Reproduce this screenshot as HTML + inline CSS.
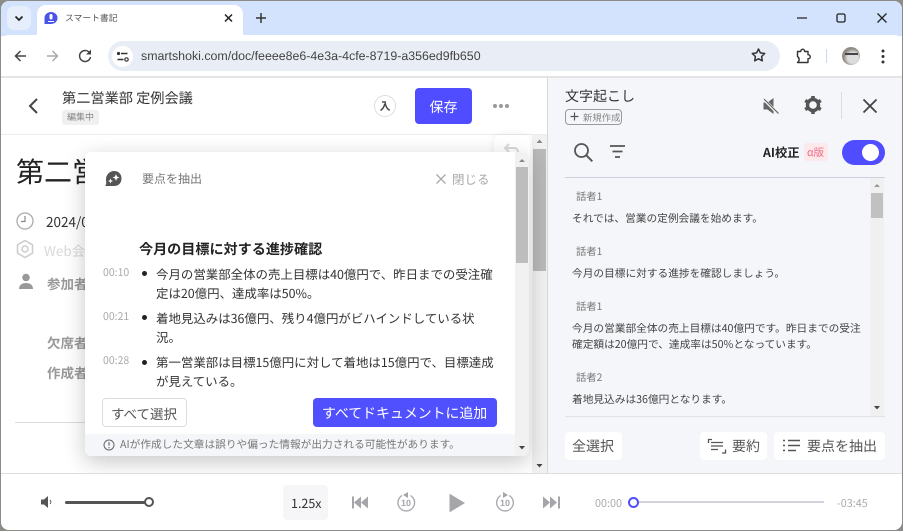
<!DOCTYPE html>
<html lang="ja"><head><meta charset="utf-8"><title>スマート書記</title>
<style>
*{box-sizing:border-box}
html,body{margin:0;padding:0;width:903px;height:531px;overflow:hidden;background:#8c8c86}
body{font-family:"Liberation Sans","Noto Sans CJK JP",sans-serif;position:relative;text-rendering:geometricPrecision}
#win{position:absolute;left:1px;top:1px;width:901px;height:529px;border-radius:8px;overflow:hidden;background:#fff;filter:blur(.35px)}
#in{position:absolute;left:-1px;top:-1px;width:903px;height:531px}
.a{position:absolute}
.t{position:absolute;white-space:nowrap;line-height:20px;height:20px;color:#333;font-family:"Noto Sans CJK JP","Liberation Sans",sans-serif}
svg{position:absolute;overflow:visible}
</style></head><body>
<div id="win"><div id="in">

<!-- tab strip -->
<div class="a" style="left:0;top:0;width:903px;height:36px;background:#d3e3fd"></div>
<div class="a" style="left:7px;top:6px;width:24px;height:24px;border-radius:7px;background:#e6eefb"></div>
<svg style="left:0;top:0" width="60" height="36"><path d="M15.500 16.500l3.500 3.500 3.500-3.500" fill="none" stroke="#222" stroke-width="1.700"/></svg>
<div class="a" style="left:37px;top:5px;width:206px;height:31px;background:#fff;border-radius:9px 9px 0 0"></div>
<svg style="left:0;top:0" width="60" height="36"><path d="M51 12c3.600 0 6.500 2.600 6.500 6 0 3.500-2.900 6-6.500 6h-6.500v-6c0-3.400 2.900-6 6.500-6z" fill="#4a55e8"/><rect x="49.500" y="14" width="3" height="5.500" rx="1.500" fill="#fff"/><path d="M48 21.500h6" stroke="#fff" stroke-width="1"/></svg>
<div class="t" style="left:65px;top:8px;font-size:8.800px;color:#555">スマート書記</div>
<svg style="left:0;top:0" width="300" height="36"><path d="M225 14.500l7 7M232 14.500l-7 7" stroke="#222" stroke-width="1.500"/><path d="M261 13v10M256 18h10" stroke="#333" stroke-width="1.500"/></svg>
<svg style="left:780px;top:0" width="123" height="36"><path d="M17 18h10" stroke="#222" stroke-width="1.300"/><rect x="57" y="14" width="8" height="8" rx="1.500" fill="none" stroke="#222" stroke-width="1.300"/><path d="M97.500 13.500l9 9M106.500 13.500l-9 9" stroke="#222" stroke-width="1.300"/></svg>

<!-- toolbar -->
<div class="a" style="left:0;top:35px;width:903px;height:42px;background:#fff;border-radius:9px 9px 0 0"></div>
<svg style="left:0;top:35px" width="110" height="42"><path d="M26 21H16M20.500 16l-5 5 5 5" fill="none" stroke="#444" stroke-width="1.500"/><path d="M47 21h10M52.500 16l5 5-5 5" fill="none" stroke="#aaa" stroke-width="1.500"/><path d="M90 18.500a5.500 5.500 0 1 0 .5 3.500" fill="none" stroke="#444" stroke-width="1.500"/><path d="M91 14.500v5h-5z" fill="#444"/></svg>
<div class="a" style="left:108px;top:41px;width:672px;height:30px;border-radius:15px;background:#e9eef6"></div>
<div class="a" style="left:112px;top:46px;width:21px;height:21px;border-radius:50%;background:#fff"></div>
<svg style="left:112px;top:46px" width="22" height="22"><circle cx="6.500" cy="7.500" r="1.600" fill="#333"/><path d="M9 7.500h6.500M5.500 13.500h6" stroke="#333" stroke-width="1.400"/><circle cx="14.500" cy="13.500" r="1.700" fill="none" stroke="#333" stroke-width="1.200"/></svg>
<div class="t" style="left:141px;top:46px;font-family:'Liberation Sans',sans-serif;font-size:12.400px;color:#444">smartshoki.com/doc/feeee8e6-4e3a-4cfe-8719-a356ed9fb650</div>
<svg style="left:750px;top:46px" width="20" height="20"><path d="M8.500 3l1.900 3.900 4.300.6-3.100 3 .7 4.300-3.800-2-3.800 2 .7-4.300-3.100-3 4.300-.6z" fill="none" stroke="#333" stroke-width="1.500" stroke-linejoin="round"/></svg>
<svg style="left:794px;top:46px" width="20" height="20"><path d="M3.500 5.500h3.200c0-3 4-3 4 0h3.300v3.200c3 0 3 4 0 4v3.800H3.500c2.200-1.500 2.200-4.500 0-6z" fill="none" stroke="#333" stroke-width="1.400" stroke-linejoin="round"/></svg>
<div class="a" style="left:826px;top:49px;width:1px;height:14px;background:#c7d9f5"></div>
<div class="a" style="left:842px;top:47px;width:18px;height:18px;border-radius:50%;background:radial-gradient(circle at 60% 60%,#ddd 0 35%,#8d8882 60%,#ada79f 100%)"></div>
<div class="a" style="left:845px;top:53px;width:13px;height:2px;background:#444"></div>
<svg style="left:875px;top:46px" width="16" height="20"><circle cx="8" cy="5" r="1.500" fill="#333"/><circle cx="8" cy="10.500" r="1.500" fill="#333"/><circle cx="8" cy="16" r="1.500" fill="#333"/></svg>
<div class="a" style="left:0;top:76px;width:903px;height:2px;background:#e4e4e4"></div>

<!-- left panel -->
<div class="a" style="left:0;top:78px;width:547px;height:395px;background:#fff"></div>
<svg style="left:0;top:78px" width="60" height="50"><path d="M37 21l-7 7 7 7" fill="none" stroke="#444" stroke-width="2"/></svg>
<div class="t" style="left:62px;top:88px;font-size:14.200px;color:#333">第二営業部 定例会議</div>
<div class="a" style="left:62px;top:110px;width:37px;height:15px;border-radius:3px;background:#f0f0f0"></div>
<div class="t" style="left:67px;top:107px;font-size:9px;color:#888">編集中</div>
<div class="a" style="left:374px;top:95px;width:22px;height:22px;border-radius:50%;border:1px solid #ddd;background:#fff"></div>
<div class="t" style="left:379.500px;top:96px;font-size:11px;font-weight:700;color:#444">入</div>
<div class="a" style="left:415px;top:88px;width:57px;height:36px;border-radius:4px;background:#4f4dff"></div>
<div class="t" style="left:429.500px;top:97px;font-size:14px;color:#fff">保存</div>
<svg style="left:490px;top:100px" width="24" height="12"><circle cx="5" cy="6" r="2" fill="#999"/><circle cx="11" cy="6" r="2" fill="#999"/><circle cx="17" cy="6" r="2" fill="#999"/></svg>
<div class="a" style="left:0;top:134px;width:547px;height:1px;background:#ececec"></div>

<div class="t" style="left:16px;top:151px;height:40px;line-height:40px;font-size:28px;color:#222">第二営業部</div>
<svg style="left:15px;top:211px" width="22" height="22"><circle cx="10" cy="10" r="8" fill="none" stroke="#aaa" stroke-width="1.300"/><path d="M10 5v5.500H6" fill="none" stroke="#888" stroke-width="1.200"/></svg>
<div class="t" style="left:46px;top:211px;font-size:13.500px;color:#333">2024/0</div>
<svg style="left:15px;top:239px" width="22" height="22"><path d="M10 1.500l7.500 4.300v8.400L10 18.500l-7.500-4.300V5.800z" fill="none" stroke="#ccc" stroke-width="1.500"/><circle cx="10" cy="10" r="3" fill="none" stroke="#ccc" stroke-width="1.500"/></svg>
<div class="t" style="left:44px;top:240px;font-size:13.500px;color:#d9d9d9">Web会議</div>
<svg style="left:15px;top:273px" width="22" height="22"><circle cx="11" cy="4.500" r="3.800" fill="#999"/><path d="M4 16c0-4 3-6 7-6s7 2 7 6z" fill="#999"/></svg>
<div class="t" style="left:47px;top:273px;font-size:13.500px;font-weight:700;color:#999">参加者</div>
<div class="t" style="left:47px;top:332px;font-size:13.500px;font-weight:700;color:#999">欠席者</div>
<div class="t" style="left:47px;top:362px;font-size:13.500px;font-weight:700;color:#999">作成者</div>
<div class="a" style="left:15px;top:422px;width:500px;height:1px;background:#ddd"></div>

<!-- left scrollbar -->
<div class="a" style="left:532px;top:135px;width:15px;height:338px;background:#f1f1f1"></div>
<div class="a" style="left:533px;top:149px;width:13px;height:122px;background:#b9b9b9"></div>
<svg style="left:532px;top:135px" width="15" height="338"><path d="M4.500 8l3-3.500 3 3.500z" fill="#888"/><path d="M4.500 329l3 3.500 3-3.500z" fill="#444"/></svg>
<div class="a" style="left:494px;top:135px;width:36px;height:30px;background:#fff;border-radius:6px;box-shadow:0 0 8px rgba(0,0,0,.08)"></div>
<svg style="left:500px;top:142px" width="24" height="14"><path d="M5 6h9c3 0 4 2 4 5M9 2L5 6l4 4" fill="none" stroke="#d8d8d8" stroke-width="2"/></svg>

<!-- modal -->
<div class="a" style="left:85px;top:152px;width:444px;height:304px;background:#fff;border-radius:6px;box-shadow:0 6px 22px rgba(0,0,0,.22);overflow:hidden">
 <div class="a" style="left:0;top:282px;width:444px;height:22px;background:#f5f6f9"></div>
 <div class="a" style="left:430px;top:0;width:14px;height:304px;background:#f1f1f1"></div>
 <div class="a" style="left:431px;top:15px;width:12px;height:96px;background:#bdbdbd"></div>
 <svg style="left:430px;top:0" width="14" height="304"><path d="M4 10l3-3 3 3z" fill="#888"/><path d="M4 294l3 3.500 3-3.500z" fill="#444"/></svg>
</div>
<svg style="left:103px;top:169px" width="22" height="20"><path d="M11 2c4.500 0 7.500 3 7.500 7.500s-3 7.500-7.500 7.500H2c1.700-1.700 1.200-3.300 1-6C2.700 6 6.500 2 11 2z" fill="#555"/><path d="M13 5l1 2.500 2.500 1-2.500 1-1 2.500-1-2.500-2.500-1 2.500-1zM7.500 9.500l.7 1.800 1.800.7-1.800.7-.7 1.800-.7-1.800-1.800-.7 1.800-.7z" fill="#fff"/></svg>
<div class="t" style="left:142px;top:169px;font-size:12px;color:#777">要点を抽出</div>
<svg style="left:434px;top:172px" width="14" height="14"><path d="M2.500 2.500l9 9M11.500 2.500l-9 9" stroke="#aaa" stroke-width="1.300"/></svg>
<div class="t" style="left:452px;top:169px;font-size:12.500px;color:#aaa">閉じる</div>
<div class="t" style="left:139px;top:239px;font-size:14.100px;font-weight:700;color:#222">今月の目標に対する進捗確認</div>

<div class="t" style="left:103px;top:263px;font-size:10.500px;color:#aaa">00:10</div>
<div class="a" style="left:142px;top:271px;width:5px;height:5px;border-radius:50%;background:#222"></div>
<div class="t" style="left:156px;top:264px;font-size:12.450px;color:#333">今月の営業部全体の売上目標は40億円で、昨日までの受注確</div>
<div class="t" style="left:156px;top:283px;font-size:12.450px;color:#333">定は20億円、達成率は50%。</div>
<div class="t" style="left:103px;top:307px;font-size:10.500px;color:#aaa">00:21</div>
<div class="a" style="left:142px;top:315px;width:5px;height:5px;border-radius:50%;background:#222"></div>
<div class="t" style="left:156px;top:308px;font-size:12.450px;color:#333">着地見込みは36億円、残り4億円がビハインドしている状</div>
<div class="t" style="left:156px;top:327px;font-size:12.450px;color:#333">況。</div>
<div class="t" style="left:103px;top:351px;font-size:10.500px;color:#aaa">00:28</div>
<div class="a" style="left:142px;top:360px;width:5px;height:5px;border-radius:50%;background:#222"></div>
<div class="t" style="left:156px;top:352px;font-size:12.450px;color:#333">第一営業部は目標15億円に対して着地は15億円で、目標達成</div>
<div class="t" style="left:156px;top:371px;font-size:12.450px;color:#333">が見えている。</div>

<div class="a" style="left:102px;top:398px;width:85px;height:29px;border:1px solid #ddd;border-radius:4px;background:#fff"></div>
<div class="t" style="left:111px;top:403px;font-size:13.500px;color:#555">すべて選択</div>
<div class="a" style="left:313px;top:398px;width:184px;height:29px;border-radius:4px;background:#5050ff"></div>
<div class="t" style="left:322px;top:403px;font-size:13.900px;color:#fff">すべてドキュメントに追加</div>
<svg style="left:103px;top:439px" width="13" height="13"><circle cx="6" cy="6" r="5" fill="none" stroke="#666" stroke-width="1"/><path d="M6 3v3.800M6 8v1.200" stroke="#666" stroke-width="1.100"/></svg>
<div class="t" style="left:120px;top:435px;font-size:10.700px;color:#777">AIが作成した文章は誤りや偏った情報が出力される可能性があります。</div>

<!-- right panel -->
<div class="a" style="left:547px;top:78px;width:1px;height:395px;background:#d8d8d8"></div>
<div class="a" style="left:548px;top:78px;width:355px;height:395px;background:#f5f6fa"></div>
<div class="t" style="left:565px;top:86px;font-size:14px;color:#333">文字起こし</div>
<div class="a" style="left:565px;top:109px;width:57px;height:16px;border:1px solid #999;border-radius:4px"></div>
<svg style="left:569px;top:111px" width="12" height="12"><path d="M5.500 1.500v8M1.500 5.500h8" stroke="#555" stroke-width="1.200"/></svg>
<div class="t" style="left:583px;top:107px;font-size:9.400px;color:#888">新規作成</div>
<svg style="left:761px;top:96px" width="20" height="20"><path d="M2.500 6.500h4l6-4.500v16l-6-4.500h-4z" fill="#666"/><path d="M2 2.500l15 15" stroke="#f5f6fa" stroke-width="3"/><path d="M3 3l14.500 14.500" stroke="#666" stroke-width="1.200"/></svg>
<svg style="left:803px;top:95px" width="20" height="20"><path d="M10 4.500a5.500 5.500 0 1 0 0 11 5.500 5.500 0 0 0 0-11z" fill="none" stroke="#555" stroke-width="3.400"/><path d="M10 1v3M10 16v3M2.200 5.500l2.600 1.500M15.200 13l2.600 1.500M2.200 14.500l2.600-1.500M15.200 7l2.600-1.500" stroke="#555" stroke-width="3.600"/></svg>
<div class="a" style="left:841px;top:92px;width:1px;height:27px;background:#ddd"></div>
<svg style="left:860px;top:96px" width="20" height="20"><path d="M3.500 3.500l13 13M16.500 3.500l-13 13" stroke="#444" stroke-width="1.800"/></svg>
<svg style="left:573px;top:142px" width="22" height="22"><circle cx="8.500" cy="8.500" r="6.500" fill="none" stroke="#555" stroke-width="1.800"/><path d="M13.300 13.300l6 6" stroke="#555" stroke-width="2"/></svg>
<svg style="left:608px;top:143px" width="20" height="18"><path d="M2 3h15M4.500 8.500h10M7 14h5" stroke="#555" stroke-width="1.800"/></svg>
<div class="t" style="left:763px;top:142px;font-size:12.300px;font-weight:700;color:#222">AI校正</div>
<div class="a" style="left:804px;top:143px;width:24px;height:18px;border-radius:3px;background:#fde8ec"></div>
<div class="t" style="left:807px;top:143px;font-size:10.500px;color:#f06a85">α版</div>
<div class="a" style="left:842px;top:140px;width:43px;height:25px;border-radius:13px;background:#4f4dff"></div>
<div class="a" style="left:862px;top:144px;width:17px;height:17px;border-radius:50%;background:#fff"></div>
<div class="a" style="left:565px;top:177px;width:320px;height:1px;background:#cfd0de"></div>

<div class="t" style="left:576px;top:186px;font-size:10.300px;color:#777">話者1</div>
<div class="t" style="left:572px;top:209px;font-size:10.700px;color:#444">それでは、営業の定例会議を始めます。</div>
<div class="t" style="left:576px;top:241px;font-size:10.300px;color:#777">話者1</div>
<div class="t" style="left:572px;top:264px;font-size:10.700px;color:#444">今月の目標に対する進捗を確認しましょう。</div>
<div class="t" style="left:576px;top:296px;font-size:10.300px;color:#777">話者1</div>
<div class="t" style="left:572px;top:319px;font-size:10.700px;color:#444">今月の営業部全体の売上目標は40億円です。昨日までの受注</div>
<div class="t" style="left:572px;top:335px;font-size:10.700px;color:#444">確定額は20億円で、達成率は50%となっています。</div>
<div class="t" style="left:576px;top:367px;font-size:10.300px;color:#777">話者2</div>
<div class="t" style="left:572px;top:390px;font-size:10.700px;color:#444">着地見込みは36億円となります。</div>

<div class="a" style="left:870px;top:178px;width:14px;height:238px;background:#f0f0f1"></div>
<div class="a" style="left:871px;top:193px;width:12px;height:25px;background:#c1c1c1"></div>
<svg style="left:870px;top:178px" width="14" height="238"><path d="M4 9l3-3 3 3z" fill="#999"/><path d="M4 228l3 3.500 3-3.500z" fill="#444"/></svg>
<div class="a" style="left:565px;top:416px;width:320px;height:1px;background:#e2e2e6"></div>

<div class="a" style="left:565px;top:432px;width:57px;height:28px;border-radius:4px;background:#fff"></div>
<div class="t" style="left:572px;top:436px;font-size:14px;color:#555">全選択</div>
<div class="a" style="left:700px;top:432px;width:67px;height:28px;border-radius:4px;background:#fff"></div>
<svg style="left:706px;top:436px" width="22" height="20"><path d="M2.500 7V3.500H6M19.500 13.500V17H16" fill="none" stroke="#555" stroke-width="1.300"/><path d="M5 6.500h12M5 10h12M5 13.500h7" stroke="#555" stroke-width="1.300"/></svg>
<div class="t" style="left:732px;top:436px;font-size:14px;color:#555">要約</div>
<div class="a" style="left:774px;top:432px;width:111px;height:28px;border-radius:4px;background:#fff"></div>
<svg style="left:782px;top:437px" width="20" height="18"><path d="M1 3.500h2M1 8.500h2M1 13.500h2" stroke="#555" stroke-width="1.500"/><path d="M6 3.500h12M6 8.500h12M6 13.500h8" stroke="#555" stroke-width="1.400"/></svg>
<div class="t" style="left:807px;top:436px;font-size:14px;color:#555">要点を抽出</div>

<!-- player -->
<div class="a" style="left:0;top:473px;width:903px;height:1px;background:#dedede"></div>
<div class="a" style="left:0;top:474px;width:903px;height:57px;background:#fff"></div>
<svg style="left:40px;top:495px" width="16" height="14"><path d="M1 4.500h3l4-3.500v12l-4-3.500H1z" fill="#555"/><path d="M10 5c1.200 1.200 1.200 2.800 0 4" fill="none" stroke="#555" stroke-width="1"/></svg>
<div class="a" style="left:65px;top:501px;width:82px;height:3px;border-radius:2px;background:#555"></div>
<div class="a" style="left:144px;top:497px;width:10px;height:10px;border-radius:50%;border:2px solid #555;background:#fff"></div>
<div class="a" style="left:283px;top:485px;width:45px;height:35px;border-radius:4px;background:#f6f6f8"></div>
<div class="t" style="left:291px;top:493px;font-size:12.500px;color:#333">1.25x</div>
<svg style="left:350px;top:492px" width="220" height="22">
 <path d="M3 4.500v12" stroke="#a5a5aa" stroke-width="2"/><path d="M4 10.500l7-6v12zM11 10.500l7-6v12z" fill="#a5a5aa"/>
 <path d="M52 3.500a8.300 8.300 0 1 0 8.500 0" fill="none" stroke="#a5a5aa" stroke-width="1.300"/><path d="M58 0v6l-5-3z" fill="#a5a5aa"/>
 <path d="M100 2.500l14 8.500-14 8.500z" fill="#a5a5aa" stroke="#a5a5aa" stroke-width="1"/>
 <path d="M150.750 3.500a8.300 8.300 0 1 0 8.500 0" fill="none" stroke="#a5a5aa" stroke-width="1.300"/><path d="M153 0v6l5-3z" fill="#a5a5aa"/>
 <path d="M193 4.500l7 6-7 6zM200 4.500l7 6-7 6z" fill="#a5a5aa"/><path d="M209 4.500v12" stroke="#a5a5aa" stroke-width="2"/>
</svg>
<div class="t" style="left:400px;top:493px;width:12px;text-align:center;font-size:9px;font-weight:700;color:#a5a5aa;font-family:'Liberation Sans',sans-serif">10</div>
<div class="t" style="left:499px;top:493px;width:12px;text-align:center;font-size:9px;font-weight:700;color:#a5a5aa;font-family:'Liberation Sans',sans-serif">10</div>
<div class="t" style="left:595px;top:493px;font-size:10.800px;color:#aaa">00:00</div>
<div class="a" style="left:636px;top:501px;width:188px;height:2px;background:#d2d2dc"></div>
<div class="a" style="left:628px;top:497px;width:11px;height:11px;border-radius:50%;border:2px solid #4f4dff;background:#fff"></div>
<div class="t" style="left:837px;top:493px;font-size:10.800px;color:#aaa">-03:45</div>
</div></div>
</body></html>
